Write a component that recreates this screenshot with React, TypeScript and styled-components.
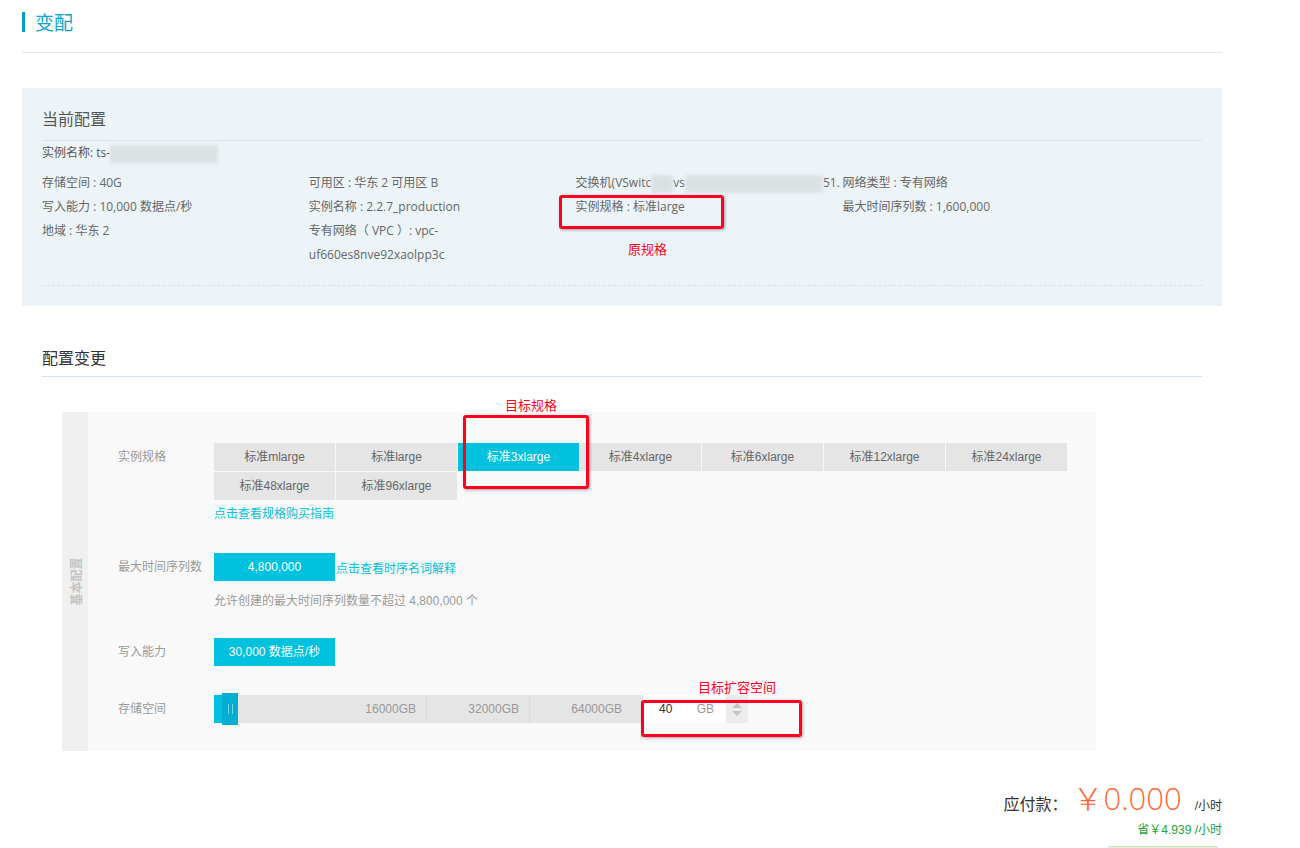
import React from "react";
import styled, { createGlobalStyle } from "styled-components";

const GlobalStyle = createGlobalStyle`
  html, body {
    margin: 0;
    padding: 0;
    background: #fff;
  }
  body {
    font-family: "Liberation Sans", "Noto Sans CJK SC", sans-serif;
    font-size: 12px;
    color: #333;
  }
`;

const specs = [
  "标准mlarge",
  "标准large",
  "标准3xlarge",
  "标准4xlarge",
  "标准6xlarge",
  "标准12xlarge",
  "标准24xlarge",
  "标准48xlarge",
  "标准96xlarge",
];

const App = () => {
  return (
    <>
      <GlobalStyle />
      <Page>
        <Header>
          <TitleBar />
          <Title>变配</Title>
        </Header>

        <CurrentPanel>
          <PanelTitle>当前配置</PanelTitle>
          <NameRow>
            实例名称: ts-
            <Redact $w={108} />
          </NameRow>
          <InfoGrid>
            <InfoCol>
              <span>存储空间 : 40G</span>
              <span>写入能力 : 10,000 数据点/秒</span>
              <span>地域 : 华东 2</span>
            </InfoCol>
            <InfoCol>
              <span>可用区 : 华东 2 可用区 B</span>
              <span>实例名称 : 2.2.7_production</span>
              <span>
                专有网络（ VPC ）: vpc-
                <br />
                uf660es8nve92xaolpp3c
              </span>
            </InfoCol>
            <InfoCol>
              <NoWrap>
                交换机(VSwitc
                <Redact $w={22} />
                vs
                <Redact $w={138} />
                51.
              </NoWrap>
              <span>实例规格 : 标准large</span>
            </InfoCol>
            <InfoCol>
              <span>网络类型 : 专有网络</span>
              <span>最大时间序列数 : 1,600,000</span>
            </InfoCol>
          </InfoGrid>
          <DashedLine />

          <MarkBox $left={537} $top={107} $w={165} $h={34} />
          <MarkText $left={606} $top={153}>
            原规格
          </MarkText>
        </CurrentPanel>

        <ChangeSection>
          <SectionTitle>配置变更</SectionTitle>
          <FormBox>
            <SideStripe>
              <SideLabel>基本配置</SideLabel>
            </SideStripe>
            <FormBody>
              <FormRow>
                <Label>实例规格</Label>
                <div>
                  <SpecGrid>
                    {specs.map((s) => (
                      <SpecButton key={s} $active={s === "标准3xlarge"}>
                        {s}
                      </SpecButton>
                    ))}
                  </SpecGrid>
                  <HelpLink>点击查看规格购买指南</HelpLink>
                </div>
              </FormRow>

              <FormRow $gap={31}>
                <Label>最大时间序列数</Label>
                <div>
                  <InlineRow>
                    <ValueBox>4,800,000</ValueBox>
                    <InlineLink>点击查看时序名词解释</InlineLink>
                  </InlineRow>
                  <Hint>允许创建的最大时间序列数量不超过 4,800,000 个</Hint>
                </div>
              </FormRow>

              <FormRow $gap={29}>
                <Label>写入能力</Label>
                <ValueBox>30,000 数据点/秒</ValueBox>
              </FormRow>

              <FormRow $gap={29}>
                <Label>存储空间</Label>
                <InlineRow>
                  <Track>
                    <TrackFill />
                    <Handle>
                      <Grip />
                      <Grip />
                    </Handle>
                    <Segment $w={189}>16000GB</Segment>
                    <Segment $w={103}>32000GB</Segment>
                    <Segment $w={113} $last>
                      64000GB
                    </Segment>
                  </Track>
                  <NumInput>
                    <NumValue>40</NumValue>
                    <Unit>GB</Unit>
                  </NumInput>
                  <Spinner>
                    <ArrowUp />
                    <ArrowDown />
                  </Spinner>
                </InlineRow>
              </FormRow>
            </FormBody>

            <MarkText $left={443} $top={-15}>
              目标规格
            </MarkText>
            <MarkBox $left={401} $top={3} $w={126} $h={74} />
            <MarkText $left={636} $top={267}>
              目标扩容空间
            </MarkText>
            <MarkBox $left={579} $top={288} $w={161} $h={37} />
          </FormBox>
        </ChangeSection>

        <PriceArea>
          <PriceLine>
            <PriceLabel>应付款：</PriceLabel>
            <PriceValue>￥0.000</PriceValue>
            <PriceUnit>/小时</PriceUnit>
          </PriceLine>
          <Saving>省￥4.939 /小时</Saving>
          <BuyButton />
        </PriceArea>
      </Page>
    </>
  );
};

//  --- Page ---
const Page = styled.div`
  width: 1200px;
  margin-left: 22px;
  height: 848px;
  overflow: hidden;
`;

const Header = styled.div`
  display: flex;
  align-items: center;
  height: 22px;
  padding: 11px 0 19px;
  border-bottom: 1px solid #e4e4e4;
`;

const TitleBar = styled.span`
  width: 3px;
  height: 20px;
  background: #00a0c8;
`;

const Title = styled.h1`
  margin: 0 0 0 10px;
  font-size: 19px;
  font-weight: normal;
  line-height: 22px;
  color: #0ea3ca;
  font-family: "Noto Sans CJK SC", sans-serif;
`;

//  --- Current config ---
const CurrentPanel = styled.section`
  position: relative;
  margin-top: 35px;
  padding: 18px 20px 20px;
  background: #edf4f8;
  font-family: "Open Sans", "Noto Sans CJK SC", sans-serif;
  color: #666;
`;

const PanelTitle = styled.h2`
  margin: 0;
  font-size: 16px;
  font-weight: normal;
  line-height: 24px;
  color: #555;
  padding-bottom: 10px;
  border-bottom: 1px solid #d9e3ea;
  font-family: "Noto Sans CJK SC", sans-serif;
`;

const NameRow = styled.div`
  line-height: 24px;
  color: #555;
`;

const Redact = styled.span<{ $w: number }>`
  display: inline-block;
  width: ${(p) => p.$w}px;
  height: 18px;
  vertical-align: middle;
  background: #dce1e4;
  filter: blur(1.5px);
`;

const InfoGrid = styled.div`
  display: grid;
  grid-template-columns: repeat(4, 23%);
  margin-top: 6px;
`;

const InfoCol = styled.div`
  display: flex;
  flex-direction: column;
  line-height: 24px;
`;

const NoWrap = styled.span`
  white-space: nowrap;
`;

const DashedLine = styled.div`
  margin-top: 18px;
  border-top: 1px dashed #d6e1e8;
`;

//  --- Annotations ---
const MarkBox = styled.div<{ $left: number; $top: number; $w: number; $h: number }>`
  position: absolute;
  left: ${(p) => p.$left}px;
  top: ${(p) => p.$top}px;
  width: ${(p) => p.$w}px;
  height: ${(p) => p.$h}px;
  box-sizing: border-box;
  border: 3px solid #ff0020;
  border-radius: 3px;
  box-shadow: 1px 1px 3px rgba(0, 0, 0, 0.35);
  pointer-events: none;
`;

const MarkText = styled.span<{ $left: number; $top: number }>`
  position: absolute;
  left: ${(p) => p.$left}px;
  top: ${(p) => p.$top}px;
  font-family: "Noto Sans CJK SC", sans-serif;
  font-size: 13px;
  line-height: 16px;
  color: #ff0020;
  white-space: nowrap;
`;

//  --- Change section ---
const ChangeSection = styled.section`
  margin-top: 39px;
  padding: 0 20px;
`;

const SectionTitle = styled.h2`
  margin: 0;
  font-size: 16px;
  font-weight: normal;
  line-height: 24px;
  color: #333;
  padding-bottom: 7px;
  border-bottom: 1px solid #d3e2ec;
  font-family: "Noto Sans CJK SC", sans-serif;
`;

const FormBox = styled.div`
  position: relative;
  display: flex;
  width: 1034px;
  height: 339px;
  margin: 35px 0 0 20px;
  background: #f9f9f9;
`;

const SideStripe = styled.div`
  width: 26px;
  background: #f0f0f0;
  display: flex;
  align-items: center;
  justify-content: center;
`;

const SideLabel = styled.span`
  display: inline-block;
  transform: rotate(-90deg);
  white-space: nowrap;
  font-size: 12px;
  font-weight: bold;
  color: #c4c4c4;
  font-family: "Noto Sans CJK SC", sans-serif;
`;

const FormBody = styled.div`
  padding: 31px 0 0 30px;
`;

const FormRow = styled.div<{ $gap?: number }>`
  display: flex;
  align-items: flex-start;
  margin-top: ${(p) => p.$gap ?? 0}px;
`;

const Label = styled.div`
  width: 96px;
  line-height: 28px;
  color: #999;
`;

const SpecGrid = styled.div`
  display: grid;
  grid-template-columns: repeat(7, 121px);
  gap: 1px;
`;

const SpecButton = styled.div<{ $active?: boolean }>`
  height: 28px;
  line-height: 28px;
  text-align: center;
  background: ${(p) => (p.$active ? "#00c1de" : "#e5e5e5")};
  color: ${(p) => (p.$active ? "#fff" : "#666")};
`;

const HelpLink = styled.div`
  margin-top: 6px;
  line-height: 16px;
  color: #00c1de;
`;

const InlineRow = styled.div`
  display: flex;
  align-items: center;
`;

const ValueBox = styled.div`
  width: 121px;
  height: 28px;
  line-height: 28px;
  text-align: center;
  background: #00c1de;
  color: #fff;
`;

const InlineLink = styled.span`
  margin-left: 1px;
  color: #00c1de;
`;

const Hint = styled.div`
  margin-top: 12px;
  line-height: 16px;
  color: #999;
`;

//  --- Slider ---
const Track = styled.div`
  display: flex;
  align-items: center;
  height: 28px;
  background: #e5e5e5;
`;

const TrackFill = styled.span`
  width: 8px;
  height: 28px;
  background: #00c1de;
`;

const Handle = styled.span`
  display: flex;
  align-items: center;
  justify-content: center;
  gap: 3px;
  width: 16px;
  height: 32px;
  background: #00aed1;
`;

const Grip = styled.span`
  width: 1px;
  height: 10px;
  background: #7fd6e8;
`;

const Segment = styled.span<{ $w: number; $last?: boolean }>`
  box-sizing: border-box;
  width: ${(p) => p.$w}px;
  height: 28px;
  line-height: 28px;
  padding-right: ${(p) => (p.$last ? 21 : 10)}px;
  text-align: right;
  color: #999;
  border-right: ${(p) => (p.$last ? "none" : "1px solid #dadada")};
`;

const NumInput = styled.div`
  display: flex;
  align-items: center;
  box-sizing: border-box;
  width: 82px;
  height: 28px;
  padding: 0 11px 0 16px;
  background: #fff;
`;

const NumValue = styled.span`
  color: #333;
  font-size: 12px;
`;

const Unit = styled.span`
  margin-left: auto;
  color: #999;
`;

const Spinner = styled.div`
  display: flex;
  flex-direction: column;
  align-items: center;
  justify-content: center;
  gap: 3px;
  width: 22px;
  height: 28px;
  margin-left: 1px;
  background: #ececec;
`;

const ArrowUp = styled.span`
  width: 0;
  height: 0;
  border-left: 5px solid transparent;
  border-right: 5px solid transparent;
  border-bottom: 5px solid #c4c4c4;
`;

const ArrowDown = styled.span`
  width: 0;
  height: 0;
  border-left: 5px solid transparent;
  border-right: 5px solid transparent;
  border-top: 5px solid #c4c4c4;
`;

//  --- Price ---
const PriceArea = styled.div`
  display: flex;
  flex-direction: column;
  align-items: flex-end;
  margin-top: 25px;
`;

const PriceLine = styled.div`
  display: flex;
  align-items: baseline;
`;

const PriceLabel = styled.span`
  font-size: 16px;
  color: #333;
  font-family: "Noto Sans CJK SC", sans-serif;
`;

const PriceValue = styled.span`
  margin-left: 5px;
  font-family: "Open Sans", "Noto Sans CJK SC", sans-serif;
  font-weight: 300;
  font-size: 31px;
  line-height: 44px;
  color: #ff6a3d;
`;

const PriceUnit = styled.span`
  margin-left: 13px;
  font-size: 12px;
  color: #333;
`;

const Saving = styled.div`
  margin-top: 2px;
  line-height: 16px;
  color: #22a33a;
`;

const BuyButton = styled.div`
  width: 110px;
  height: 30px;
  margin: 8px 4px 0 0;
  box-sizing: border-box;
  background: #e4f3de;
  border: 1px solid #c3e2b8;
  border-radius: 2px;
`;

export default App;
